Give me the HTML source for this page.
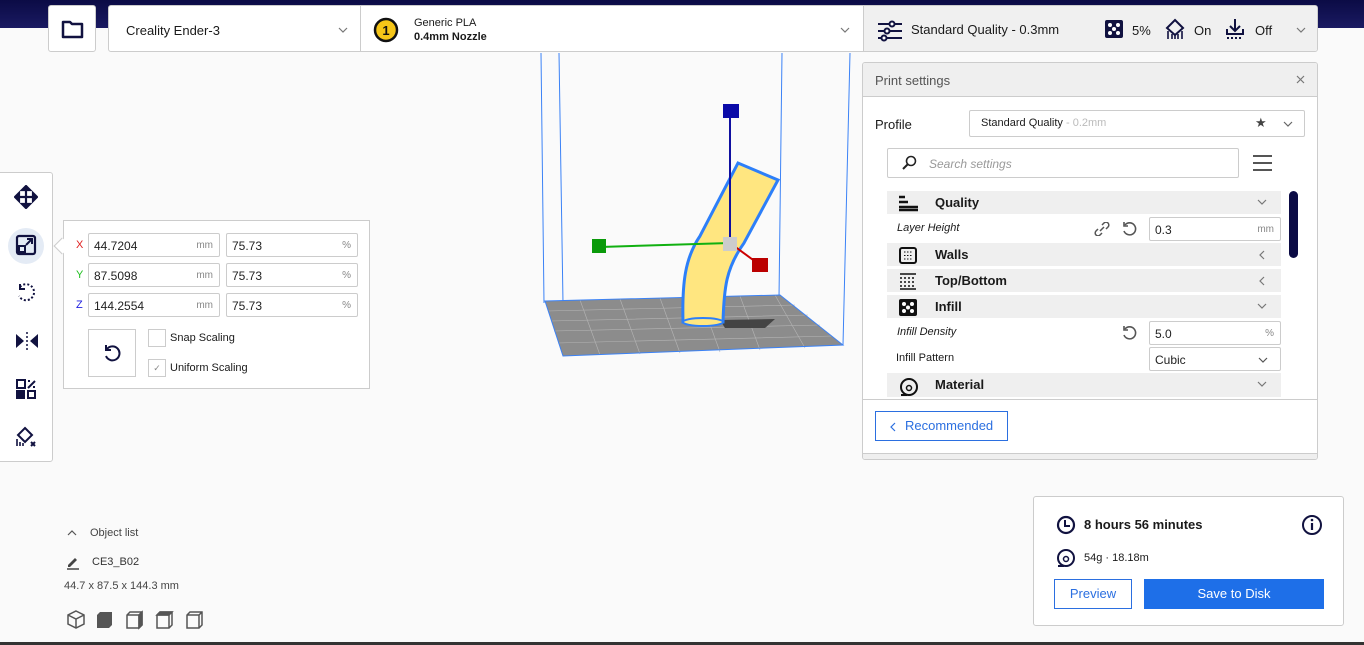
<!DOCTYPE html>
<html><head><meta charset="utf-8"><style>
*{box-sizing:border-box;margin:0;padding:0}
body{width:1364px;height:645px;overflow:hidden;background:#fafafa;font-family:"Liberation Sans",sans-serif;color:#1a1a1a;position:relative;font-size:12px}
.abs{position:absolute}
.hdr{left:0;top:0;width:1364px;height:28px;background:linear-gradient(#0b0b45,#1a1a62)}
.box{background:#fff;border:1px solid #ccc;border-radius:2px}
.inp{position:absolute;background:#fff;border:1px solid #ccc;border-radius:2px;height:24px;font-size:12px;padding:5px 0 0 5px;color:#222}
.unit{position:absolute;right:6px;top:6px;font-size:10px;color:#888}
.cat{position:absolute;left:887px;width:394px;height:23px;background:#efefef;font-weight:bold;font-size:13px}
.cat span{position:absolute;left:48px;top:4px}
.cat .ic{position:absolute;left:12px;top:4px}
.cat .ch{position:absolute;right:14px;top:8px}
svg{display:block}
</style></head><body>
<div class="abs hdr"></div>
<!-- folder -->
<div class="abs box" style="left:48px;top:5px;width:48px;height:47px;border-radius:3px">
<svg class="abs" style="left:12px;top:13px" width="24" height="20"><path d="M2 3h7l2 2h10v13H2z" fill="none" stroke="#111240" stroke-width="2.5" stroke-linejoin="round"/></svg></div>
<!-- printer -->
<div class="abs box" style="left:108px;top:5px;width:1210px;height:47px;border-radius:3px;overflow:hidden">
<div class="abs" style="left:17px;top:17px;font-size:13px">Creality Ender-3</div>
<svg class="abs" style="left:229px;top:21px" width="10" height="6"><path d="M1 1l4 4 4-4" fill="none" stroke="#777" stroke-width="1.2"/></svg>
<div class="abs" style="left:251px;top:0;width:1px;height:47px;background:#ccc"></div>
<svg class="abs" style="left:264px;top:11px" width="26" height="26"><circle cx="13" cy="13" r="11" fill="#f5c518" stroke="#111" stroke-width="2.5"/><text x="13" y="18" font-size="13" font-weight="bold" text-anchor="middle" font-family="Liberation Sans" fill="#111">1</text></svg>
<div class="abs" style="left:305px;top:11px;font-size:11px">Generic PLA</div>
<div class="abs" style="left:305px;top:25px;font-size:11px;font-weight:bold">0.4mm Nozzle</div>
<svg class="abs" style="left:731px;top:21px" width="10" height="6"><path d="M1 1l4 4 4-4" fill="none" stroke="#777" stroke-width="1.2"/></svg>
<div class="abs" style="left:754px;top:0;width:456px;height:47px;background:#f0f0f0;border-left:1px solid #ccc"></div>
<svg class="abs" style="left:768px;top:14px" width="26" height="22"><g stroke="#111240" stroke-width="2" fill="#fff"><path d="M1 4h24M1 11h24M1 18h24"/><circle cx="15" cy="4" r="2.5"/><circle cx="10" cy="11" r="2.5"/><circle cx="7" cy="18" r="2.5"/></g></svg>
<div class="abs" style="left:802px;top:16px;font-size:13px">Standard Quality - 0.3mm</div>
<svg class="abs" style="left:996px;top:14px" width="18" height="18"><rect width="18" height="18" rx="2" fill="#111240"/><g fill="#fff"><circle cx="5" cy="5" r="2"/><circle cx="13" cy="5" r="2"/><circle cx="9" cy="9" r="2"/><circle cx="5" cy="13" r="2"/><circle cx="13" cy="13" r="2"/></g></svg>
<div class="abs" style="left:1023px;top:17px;font-size:13px">5%</div>
<svg class="abs" style="left:1056px;top:12px" width="20" height="22"><path d="M10 2l8 8-8 7-8-7z" fill="none" stroke="#111240" stroke-width="2"/><path d="M3 13v8M7 16v5M10 17v4M13 16v5M17 13v8" stroke="#111240" stroke-width="1.6"/></svg>
<div class="abs" style="left:1085px;top:17px;font-size:13px">On</div>
<svg class="abs" style="left:1116px;top:12px" width="20" height="22"><path d="M10 1v11M5 8l5 5 5-5M2 11v5h16v-5" fill="none" stroke="#111240" stroke-width="2"/><path d="M2 20h16" stroke="#111240" stroke-width="2" stroke-dasharray="2 2"/></svg>
<div class="abs" style="left:1146px;top:17px;font-size:13px">Off</div>
<svg class="abs" style="left:1187px;top:21px" width="10" height="6"><path d="M1 1l4 4 4-4" fill="none" stroke="#777" stroke-width="1.2"/></svg>
</div>

<!-- viewport -->
<svg class="abs" style="left:530px;top:53px" width="330" height="305">
<g stroke="#3b82f6" stroke-width="1" fill="none">
<path d="M11 0L14 250M29 0L33 250M252 0L249 245M320 0L313 292"/>
</g>
<polygon points="15,248 250,242 313,292 33,303" fill="#8c8c8c"/>
<g stroke="#b5b5b5" stroke-width=".6">
<path d="M18 258L265 252M21 268L278 262M24 278L290 272M28 290L302 283M50 247L70 302M90 246L110 301M130 245L150 300M170 244L190 299M210 243L230 297M245 242L275 295"/>
</g>
<path d="M15 248L250 242L313 292L33 303Z" fill="none" stroke="#3b82f6"/>
<polygon points="190,267 245,266 235,275 195,275" fill="#444"/>
<path d="M153 269 C152 230 155 205 170 183 L208 110 L248 127 L214 190 C196 215 194 235 193 269 Z" fill="#ffe680" stroke="#2d7ff9" stroke-width="3"/>
<ellipse cx="173" cy="269" rx="20" ry="4" fill="#ffe680" stroke="#2d7ff9" stroke-width="2"/>
<path d="M200 57V190" stroke="#1010a0" stroke-width="2"/>
<rect x="193" y="51" width="16" height="14" fill="#0a0aa8"/>
<path d="M70 194L200 190" stroke="#10b010" stroke-width="2"/>
<rect x="62" y="186" width="14" height="14" fill="#0a9a0a"/>
<path d="M200 190L230 212" stroke="#c00" stroke-width="2"/>
<rect x="222" y="205" width="16" height="14" fill="#b00"/>
<rect x="193" y="184" width="14" height="14" fill="#ccc"/>
</svg>

<!-- left toolbar -->
<div class="abs box" style="left:-5px;top:172px;width:58px;height:290px;border-radius:3px"></div>
<svg class="abs" style="left:14px;top:185px" width="24" height="24"><path d="M12 2v20M2 12h20M12 1l-4 4h8zM12 23l-4-4h8zM1 12l4-4v8zM23 12l-4-4v8z" stroke="#111240" stroke-width="2.2" fill="#111240"/></svg>
<div class="abs" style="left:8px;top:228px;width:36px;height:36px;border-radius:50%;background:#e4ebf5"></div>
<svg class="abs" style="left:15px;top:234px" width="22" height="22"><rect x="2" y="2" width="18" height="18" rx="2" fill="none" stroke="#111240" stroke-width="2.2"/><rect x="4" y="12" width="6" height="6" fill="none" stroke="#111240" stroke-width="2"/><path d="M11 11l6-6M12 5h5v5" stroke="#111240" stroke-width="2" fill="none"/></svg>
<svg class="abs" style="left:15px;top:281px" width="22" height="22"><path d="M5 6a8 8 0 1 1 -1 9" fill="none" stroke="#111240" stroke-width="2" stroke-dasharray="2 2"/><path d="M5 3v5h5" fill="none" stroke="#111240" stroke-width="2"/></svg>
<svg class="abs" style="left:15px;top:331px" width="24" height="20"><path d="M1 3l8 7-8 7zM23 3l-8 7 8 7z" fill="#111240"/><path d="M12 1v18" stroke="#111240" stroke-width="1.5" stroke-dasharray="2 2"/></svg>
<svg class="abs" style="left:15px;top:378px" width="22" height="22"><rect x="2" y="2" width="8" height="8" fill="none" stroke="#111240" stroke-width="2"/><rect x="1" y="12" width="9" height="9" fill="#111240"/><rect x="13" y="13" width="7" height="7" fill="none" stroke="#111240" stroke-width="2"/><path d="M13 10l7-7M13 3h2M18 9h2" stroke="#111240" stroke-width="2"/></svg>
<svg class="abs" style="left:15px;top:426px" width="24" height="22"><path d="M10 2l7 7-7 7-7-7z" fill="none" stroke="#111240" stroke-width="2"/><path d="M2 13v7M5 16v4M8 17v3" stroke="#111240" stroke-width="1.6"/><path d="M16 16l4 4M20 16l-4 4" stroke="#111240" stroke-width="2"/></svg>

<!-- scale panel -->
<div class="abs box" style="left:63px;top:220px;width:307px;height:169px;border-radius:0"></div>
<div class="abs" style="left:56px;top:240px;width:12px;height:12px;background:#fff;border-left:1px solid #ccc;border-bottom:1px solid #ccc;transform:rotate(45deg)"></div>
<div class="abs" style="left:76px;top:239px;color:#e02020;font-size:11px">X</div>
<div class="abs" style="left:76px;top:269px;color:#20c020;font-size:11px">Y</div>
<div class="abs" style="left:76px;top:299px;color:#2020e0;font-size:11px">Z</div>
<div class="inp" style="left:88px;top:233px;width:132px">44.7204<span class="unit">mm</span></div>
<div class="inp" style="left:226px;top:233px;width:132px">75.73<span class="unit">%</span></div>
<div class="inp" style="left:88px;top:263px;width:132px">87.5098<span class="unit">mm</span></div>
<div class="inp" style="left:226px;top:263px;width:132px">75.73<span class="unit">%</span></div>
<div class="inp" style="left:88px;top:293px;width:132px">144.2554<span class="unit">mm</span></div>
<div class="inp" style="left:226px;top:293px;width:132px">75.73<span class="unit">%</span></div>
<div class="abs" style="left:88px;top:329px;width:48px;height:48px;border:1px solid #ccc;background:#fff"></div>
<svg class="abs" style="left:103px;top:344px" width="18" height="18"><path d="M4 5a7 7 0 1 1 -1 7" fill="none" stroke="#111240" stroke-width="2"/><path d="M3 1v5h5" fill="none" stroke="#111240" stroke-width="2"/></svg>
<div class="abs" style="left:148px;top:329px;width:18px;height:18px;border:1px solid #ccc;background:#fff"></div>
<div class="abs" style="left:170px;top:332px;font-size:11px">Snap Scaling</div>
<div class="abs" style="left:148px;top:359px;width:18px;height:18px;border:1px solid #ccc;background:#fff;font-size:9px;color:#888;text-align:center;line-height:16px">&#10003;</div>
<div class="abs" style="left:170px;top:362px;font-size:11px">Uniform Scaling</div>

<!-- object list -->
<svg class="abs" style="left:67px;top:530px" width="10" height="6"><path d="M1 5l4-4 4 4" fill="none" stroke="#555" stroke-width="1.2"/></svg>
<div class="abs" style="left:90px;top:527px;font-size:11px;color:#444">Object list</div>
<svg class="abs" style="left:66px;top:556px" width="14" height="14"><path d="M2 9l7-7 2 2-7 7H2z" fill="#444"/><path d="M1 13h12" stroke="#444" stroke-width="1.5"/></svg>
<div class="abs" style="left:92px;top:556px;font-size:11px;color:#333">CE3_B02</div>
<div class="abs" style="left:64px;top:580px;font-size:11px;color:#444">44.7 x 87.5 x 144.3 mm</div>
<svg class="abs" style="left:66px;top:609px" width="145" height="22">
<g stroke="#555" stroke-width="1.5" fill="none"><path d="M10 2l8 4v9l-8 4-8-4V6zM2 6l8 4 8-4M10 10v9"/></g>
<g transform="translate(30,0)"><path d="M4 3h12v13l-3 3H1V6z" fill="#555"/></g>
<g transform="translate(60,0)" stroke="#555" stroke-width="1.5" fill="none"><path d="M4 3h12v13l-3 3H1V6zM1 6h12v13M13 6l3-3"/><path d="M13 6l3-3v13l-3 3z" fill="#555"/></g>
<g transform="translate(90,0)" stroke="#555" stroke-width="1.5" fill="none"><path d="M4 3h12v13l-3 3H1V6zM1 6h12v13"/><path d="M1 6l3-3h12l-3 3z" fill="#555"/></g>
<g transform="translate(120,0)" stroke="#555" stroke-width="1.5" fill="none"><path d="M4 3h12v13l-3 3H1V6zM1 6h12l3-3M13 6v13"/></g>
</svg>

<!-- print settings panel -->
<div class="abs" style="left:862px;top:62px;width:456px;height:398px;background:#fff;border:1px solid #ccc;border-radius:3px;overflow:hidden">
<div class="abs" style="left:0;top:0;width:456px;height:34px;background:#efefef;border-bottom:1px solid #ccc"></div>
<div class="abs" style="left:12px;top:10px;font-size:13px;color:#555">Print settings</div>
<svg class="abs" style="left:433px;top:12px" width="9" height="9"><path d="M1 1l7 7M8 1l-7 7" stroke="#777" stroke-width="1.2"/></svg>
<div class="abs" style="left:0;top:336px;width:456px;height:1px;background:#ccc"></div>
<div class="abs" style="left:0;top:390px;width:456px;height:8px;background:#efefef;border-top:1px solid #ccc"></div>
</div>
<div class="abs" style="left:875px;top:117px;font-size:13px">Profile</div>
<div class="abs" style="left:969px;top:110px;width:336px;height:27px;border:1px solid #ccc;border-radius:2px;background:#fff">
<span class="abs" style="left:11px;top:6px;font-size:11px">Standard Quality <span style="color:#bbb">- 0.2mm</span></span>
<span class="abs" style="left:285px;top:4px;color:#444;font-size:13px">&#9733;</span>
<svg class="abs" style="left:313px;top:10px" width="10" height="6"><path d="M1 1l4 4 4-4" fill="none" stroke="#666" stroke-width="1.2"/></svg></div>
<div class="abs" style="left:887px;top:148px;width:352px;height:30px;border:1px solid #ccc;border-radius:2px;background:#fff">
<svg class="abs" style="left:13px;top:6px" width="16" height="16"><circle cx="10" cy="6" r="4.5" fill="none" stroke="#222" stroke-width="1.6"/><path d="M7 9l-5 5" stroke="#222" stroke-width="2"/></svg>
<span class="abs" style="left:41px;top:8px;font-size:12px;font-style:italic;color:#999">Search settings</span></div>
<svg class="abs" style="left:1253px;top:154px" width="20" height="18"><path d="M0 2h19M0 9h19M0 16h19" stroke="#555" stroke-width="2"/></svg>
<div class="abs" style="left:1289px;top:191px;width:9px;height:67px;background:#0b0b45;border-radius:5px"></div>

<div class="cat" style="top:191px"><svg class="ic" width="19" height="17"><path d="M0 2h6M0 7h9M0 12h19M0 15h19" stroke="#111" stroke-width="2.5"/></svg><span>Quality</span><svg class="ch" width="10" height="6"><path d="M1 1l4 4 4-4" fill="none" stroke="#777" stroke-width="1.2"/></svg></div>
<div class="abs" style="left:897px;top:222px;font-size:11px;font-style:italic">Layer Height</div>
<svg class="abs" style="left:1094px;top:222px" width="16" height="14"><path d="M6 9l4-4M4 7l-2 2a2.5 2.5 0 0 0 4 4l2-2M12 7l2-2a2.5 2.5 0 0 0-4-4L8 3" fill="none" stroke="#555" stroke-width="1.5"/></svg>
<svg class="abs" style="left:1121px;top:221px" width="16" height="16"><path d="M4 4a6 6 0 1 1 -1 6" fill="none" stroke="#555" stroke-width="1.6"/><path d="M3 1v4h4" fill="none" stroke="#555" stroke-width="1.6"/></svg>
<div class="inp" style="left:1149px;top:217px;width:132px">0.3<span class="unit">mm</span></div>
<div class="cat" style="top:243px"><svg class="ic" width="18" height="17"><rect x="1" y="1" width="16" height="15" rx="2" fill="none" stroke="#111" stroke-width="2"/><path d="M5 5h8M5 8.5h8M5 12h8" stroke="#111" stroke-dasharray="1.5 1.5"/></svg><span>Walls</span><svg class="ch" style="top:7px;right:16px" width="6" height="10"><path d="M5 1L1 5l4 4" fill="none" stroke="#777" stroke-width="1.2"/></svg></div>
<div class="cat" style="top:269px"><svg class="ic" width="18" height="17"><path d="M1 1h16M1 16h16" stroke="#111" stroke-width="1.5"/><path d="M1 5h16M1 9h16M1 13h16" stroke="#111" stroke-width="1.5" stroke-dasharray="2 2"/></svg><span>Top/Bottom</span><svg class="ch" style="top:7px;right:16px" width="6" height="10"><path d="M5 1L1 5l4 4" fill="none" stroke="#777" stroke-width="1.2"/></svg></div>
<div class="cat" style="top:295px"><svg class="ic" width="18" height="17"><rect width="18" height="17" rx="2" fill="#111"/><g fill="#fff"><circle cx="5" cy="5" r="2"/><circle cx="13" cy="5" r="2"/><circle cx="9" cy="8.5" r="2"/><circle cx="5" cy="12" r="2"/><circle cx="13" cy="12" r="2"/></g></svg><span>Infill</span><svg class="ch" width="10" height="6"><path d="M1 1l4 4 4-4" fill="none" stroke="#777" stroke-width="1.2"/></svg></div>
<div class="abs" style="left:897px;top:326px;font-size:11px;font-style:italic">Infill Density</div>
<svg class="abs" style="left:1121px;top:325px" width="16" height="16"><path d="M4 4a6 6 0 1 1 -1 6" fill="none" stroke="#555" stroke-width="1.6"/><path d="M3 1v4h4" fill="none" stroke="#555" stroke-width="1.6"/></svg>
<div class="inp" style="left:1149px;top:321px;width:132px">5.0<span class="unit">%</span></div>
<div class="abs" style="left:896px;top:352px;font-size:11px">Infill Pattern</div>
<div class="inp" style="left:1149px;top:347px;width:132px">Cubic<svg class="abs" style="right:12px;top:9px" width="10" height="6"><path d="M1 1l4 4 4-4" fill="none" stroke="#555" stroke-width="1.2"/></svg></div>
<div class="cat" style="top:373px;height:24px"><svg class="ic" width="20" height="20"><circle cx="10" cy="10" r="8" fill="none" stroke="#111" stroke-width="2"/><circle cx="10" cy="11" r="2.5" fill="none" stroke="#111" stroke-width="1.5"/><path d="M2 18h6" stroke="#111" stroke-width="2"/></svg><span>Material</span><svg class="ch" width="10" height="6"><path d="M1 1l4 4 4-4" fill="none" stroke="#777" stroke-width="1.2"/></svg></div>
<div class="abs" style="left:875px;top:411px;width:133px;height:30px;border:1px solid #2b6fe0;background:#fff"></div>
<svg class="abs" style="left:890px;top:422px" width="6" height="10"><path d="M5 1L1 5l4 4" fill="none" stroke="#2b6fe0" stroke-width="1.2"/></svg>
<div class="abs" style="left:905px;top:418px;font-size:13px;color:#2b6fe0">Recommended</div>

<!-- output panel -->
<div class="abs box" style="left:1033px;top:496px;width:311px;height:130px;border-radius:3px"></div>
<svg class="abs" style="left:1056px;top:515px" width="20" height="20"><circle cx="10" cy="10" r="8" fill="none" stroke="#111240" stroke-width="2.2"/><path d="M9 5v6h5" fill="none" stroke="#111240" stroke-width="2"/></svg>
<div class="abs" style="left:1084px;top:517px;font-size:13px;font-weight:bold">8 hours 56 minutes</div>
<svg class="abs" style="left:1301px;top:514px" width="22" height="22"><circle cx="11" cy="11" r="9" fill="none" stroke="#111240" stroke-width="2"/><path d="M11 9v7" stroke="#111240" stroke-width="2.2"/><circle cx="11" cy="6" r="1.3" fill="#111240"/></svg>
<svg class="abs" style="left:1056px;top:548px" width="20" height="20"><circle cx="10" cy="10" r="8" fill="none" stroke="#111240" stroke-width="2"/><circle cx="10" cy="11" r="2.5" fill="none" stroke="#111240" stroke-width="1.5"/><path d="M2 18h6" stroke="#111240" stroke-width="2"/></svg>
<div class="abs" style="left:1084px;top:552px;font-size:11px">54g · 18.18m</div>
<div class="abs" style="left:1054px;top:579px;width:78px;height:30px;border:1px solid #2b6fe0;background:#fff;color:#2b6fe0;font-size:13px;text-align:center;line-height:28px">Preview</div>
<div class="abs" style="left:1144px;top:579px;width:180px;height:30px;background:#1e6fe8;color:#fff;font-size:13px;text-align:center;line-height:30px">Save to Disk</div>
<div class="abs" style="left:0;top:642px;width:1364px;height:3px;background:#333"></div>
</body></html>
